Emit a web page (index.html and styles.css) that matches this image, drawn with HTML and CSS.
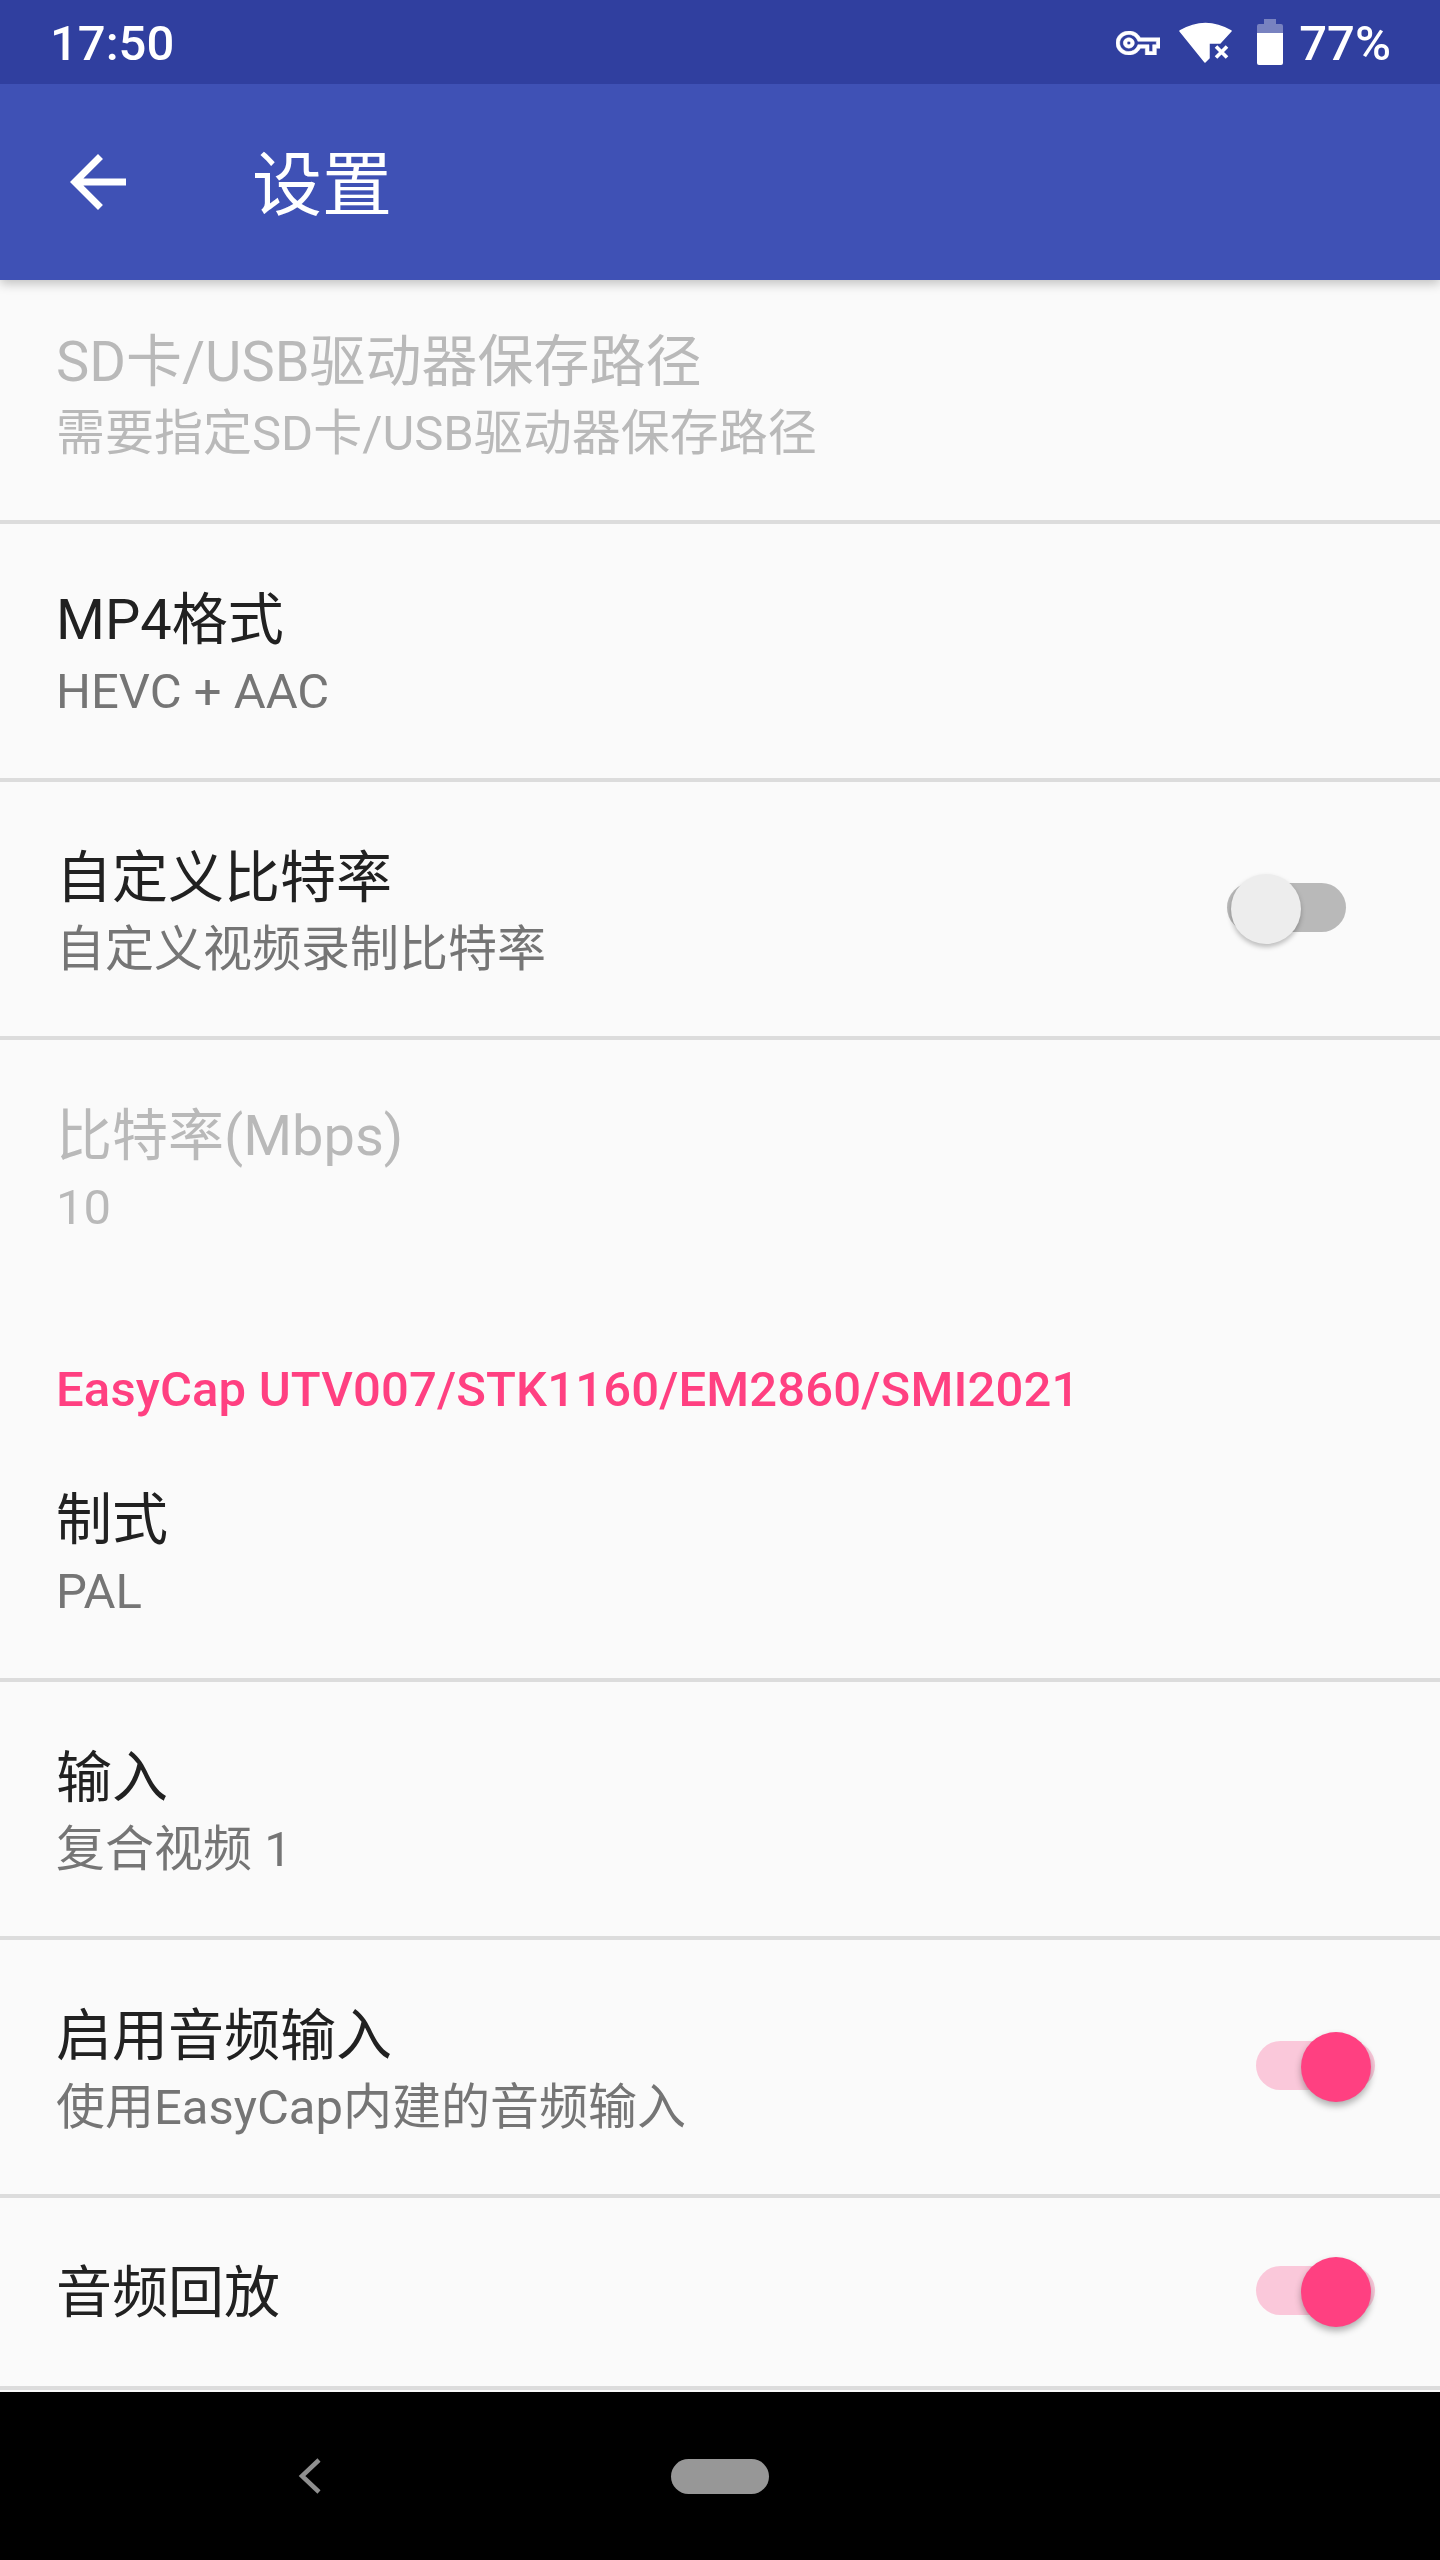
FILE: index.html
```html
<!DOCTYPE html>
<html lang="zh-CN">
<head>
  <meta charset="UTF-8">
  <meta name="viewport" content="width=device-width, initial-scale=1.0">
  <title>设置</title>
  <link rel="stylesheet" href="styles.css">
</head>
<body>
  <div class="status-bar">
    <span class="status-time">17:50</span>
    <div class="status-icons">
      <svg class="icon-key" viewBox="0 5 24 14" preserveAspectRatio="none">
        <path fill="#fff" stroke="#fff" stroke-width="0.3" d="M22 19h-6v-4h-2.68c-1.14 2.42-3.6 4-6.32 4-3.86 0-7-3.14-7-7s3.14-7 7-7c2.72 0 5.17 1.58 6.32 4H24v6h-2v4zm-4-2h2v-4h2v-2H11.94l-.23-.67C11.01 8.34 9.11 7 7 7c-2.76 0-5 2.24-5 5s2.24 5 5 5c2.11 0 4.01-1.34 4.71-3.33l.23-.67H18v4zM7 15c-1.65 0-3-1.35-3-3s1.35-3 3-3 3 1.35 3 3-1.35 3-3 3zm0-4c-.55 0-1 .45-1 1s.45 1 1 1 1-.45 1-1-.45-1-1-1z"/>
      </svg>
      <svg class="icon-wifi" viewBox="0 0 53 42">
        <path fill="#fff" stroke="#fff" stroke-width="1.5" stroke-linejoin="round" d="M1 10Q26.5 -5 52 10L41 22H30V37L26 41Z"/>
        <path fill="none" stroke="#fff" stroke-width="3.6" d="M37 25.500L48 36.500M48 25.500L37 36.500"/>
      </svg>
      <svg class="icon-battery" viewBox="0 0 26 46">
        <path fill="#fff" fill-opacity="0.35" d="M7 0h12v5h5q2 0 2 2v8H0V7q0-2 2-2h5z"/>
        <path fill="#fff" d="M0 14h26v30q0 2-2 2H2q-2 0-2-2z"/>
      </svg>
      <span class="status-battery">77%</span>
    </div>
  </div>

  <header class="toolbar">
    <svg class="icon-back" viewBox="0 0 24 24">
      <path fill="#fff" d="M20 11H7.830l5.590-5.590L12 4l-8 8 8 8 1.410-1.410L7.830 13H20v-2z"/>
    </svg>
    <h1 class="toolbar-title">设置</h1>
  </header>

  <main class="list">
    <div class="row disabled">
      <div class="row-text">
        <div class="row-title">SD卡/USB驱动器保存路径</div>
        <div class="row-summary">需要指定SD卡/USB驱动器保存路径</div>
      </div>
    </div>
    <div class="row">
      <div class="row-text">
        <div class="row-title">MP4格式</div>
        <div class="row-summary">HEVC + AAC</div>
      </div>
    </div>
    <div class="row">
      <div class="row-text">
        <div class="row-title">自定义比特率</div>
        <div class="row-summary">自定义视频录制比特率</div>
      </div>
      <div class="switch switch-off"><span class="switch-thumb"></span></div>
    </div>
    <div class="row disabled no-divider">
      <div class="row-text">
        <div class="row-title">比特率(Mbps)</div>
        <div class="row-summary">10</div>
      </div>
    </div>

    <div class="category">EasyCap UTV007/STK1160/EM2860/SMI2021</div>

    <div class="row">
      <div class="row-text">
        <div class="row-title">制式</div>
        <div class="row-summary">PAL</div>
      </div>
    </div>
    <div class="row">
      <div class="row-text">
        <div class="row-title">输入</div>
        <div class="row-summary">复合视频 1</div>
      </div>
    </div>
    <div class="row">
      <div class="row-text">
        <div class="row-title">启用音频输入</div>
        <div class="row-summary">使用EasyCap内建的音频输入</div>
      </div>
      <div class="switch switch-on"><span class="switch-thumb"></span></div>
    </div>
    <div class="row row-single">
      <div class="row-text">
        <div class="row-title">音频回放</div>
      </div>
      <div class="switch switch-on"><span class="switch-thumb"></span></div>
    </div>
  </main>

  <nav class="nav-bar">
    <svg class="nav-back" viewBox="0 0 24 36">
      <path fill="none" stroke="#8f8f8f" stroke-width="4.500" d="M21 2L4 18L21 34"/>
    </svg>
    <span class="nav-home"></span>
  </nav>
</body>
</html>
```

FILE: styles.css
```css
* {
  box-sizing: border-box;
}
html, body {
  margin: 0;
  padding: 0;
}
body {
  width: 1440px;
  height: 2560px;
  display: flex;
  flex-direction: column;
  overflow: hidden;
  background-color: #fafafa;
  font-family: Roboto, "Noto Sans CJK SC", sans-serif;
  color: #212121;
}

/* status bar */
.status-bar {
  position: relative;
  z-index: 3;
  flex: none;
  height: 84px;
  display: flex;
  align-items: center;
  justify-content: space-between;
  padding: 0 49px 0 50px;
  background-color: #303f9f;
  color: #fff;
  font-size: 49px;
}
.status-time {
  padding-top: 3px;
  font-weight: 500;
}
.status-icons {
  display: flex;
  align-items: center;
}
.icon-key {
  width: 44px;
  height: 24px;
  margin-top: 2px;
}
.icon-wifi {
  width: 53px;
  height: 42px;
  margin-left: 19px;
}
.icon-battery {
  width: 26px;
  height: 46px;
  margin-left: 25px;
}
.status-battery {
  margin-left: 16px;
  padding-top: 2px;
  font-weight: 500;
}

/* toolbar */
.toolbar {
  position: relative;
  z-index: 2;
  flex: none;
  height: 196px;
  display: flex;
  align-items: center;
  padding-left: 56px;
  background-color: #3f51b5;
  box-shadow: 0 4px 10px rgba(0, 0, 0, 0.22);
}
.icon-back {
  width: 84px;
  height: 84px;
}
.toolbar-title {
  margin: 0 0 6px 112px;
  font-size: 70px;
  font-weight: 400;
  color: #fff;
}

/* list, scrolled a little under the toolbar */
.list {
  flex: 1;
  min-height: 0;
  margin-top: -14px;
  overflow: hidden;
}
.row {
  height: 258px;
  display: flex;
  align-items: center;
  justify-content: space-between;
  padding-left: 56px;
  border-bottom: 4px solid #dcdcdc;
}
.row-single {
  height: 192px;
}
.no-divider {
  height: 254px;
  border-bottom: none;
}
.row-text {
  margin-top: 8px;
}
.row-title {
  font-size: 56px;
  line-height: 73px;
}
.row-summary {
  font-size: 49px;
  line-height: 70px;
  color: #757575;
}
.row-single .row-text {
  margin-top: 3px;
}
.disabled .row-title,
.disabled .row-summary {
  color: #b9b9b9;
}
.category {
  height: 130px;
  padding: 71px 0 0 56px;
  font-size: 49px;
  line-height: 50px;
  font-weight: 500;
  letter-spacing: 0.15px;
  color: #ff4081;
}

/* switches */
.switch {
  position: relative;
  flex: none;
  width: 119px;
  height: 49px;
  margin-top: -3px;
  border-radius: 25px;
}
.switch-thumb {
  position: absolute;
  top: -9px;
  width: 70px;
  height: 70px;
  border-radius: 50%;
}
.switch-off {
  margin-right: 94px;
  background-color: #b9b9b9;
}
.switch-off .switch-thumb {
  left: 4px;
  background-color: #ededed;
  box-shadow: 0 3px 5px rgba(0, 0, 0, 0.25);
}
.switch-on {
  margin-right: 65px;
  background-color: #fac8da;
}
.switch-on .switch-thumb {
  left: 45px;
  background-color: #ff4081;
  box-shadow: 0 4px 7px rgba(0, 0, 0, 0.3);
}

/* navigation bar */
.nav-bar {
  flex: none;
  height: 168px;
  display: flex;
  align-items: center;
  padding: 0 0 0 298px;
  background-color: #000;
}
.nav-back {
  width: 24px;
  height: 36px;
}
.nav-home {
  width: 98px;
  height: 35px;
  margin-left: 349px;
  border-radius: 18px;
  background-color: #979797;
}
```
